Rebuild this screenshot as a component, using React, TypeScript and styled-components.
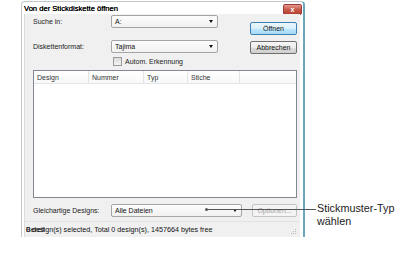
import React from 'react';
import styled, { createGlobalStyle } from 'styled-components';

const Global = createGlobalStyle`
  html, body { margin: 0; padding: 0; background: #fff; }
  body { font-family: "Liberation Sans", Arial, sans-serif; }
`;

const Page = styled.div`
  position: relative;
  width: 403px;
  height: 255px;
  padding: 1px 0 0 21px;
  box-sizing: border-box;
  overflow: hidden;
`;

const Window = styled.div`
  width: 284px;
  height: 236px;
  box-sizing: border-box;
  border: 1px solid #c3c7cc;
  border-right: 2px solid #6aa6bd;
  border-bottom: none;
  border-radius: 4px 4px 0 0;
  background: #fff;
  display: flex;
  flex-direction: column;
`;

const TitleBar = styled.div`
  height: 12px;
  display: flex;
  align-items: center;
  justify-content: space-between;
  padding: 0 1px 0 2px;
`;

const Title = styled.span`
  font-size: 7.6px;
  font-weight: 400;
  color: #000;
  text-shadow: 0 0 0.3px #000;
`;

const CloseBtn = styled.div`
  width: 17px;
  height: 9px;
  margin-top: 2px;
  border-radius: 2px;
  border: 1px solid #9e3a3a;
  background: linear-gradient(#e49a8e, #c85a4a 50%, #b7402f);
  display: flex;
  align-items: center;
  justify-content: center;
  color: #fff;
  font-size: 7px;
  font-weight: 700;
  line-height: 1;
`;

const Client = styled.div`
  flex: 1;
  margin: 0 3px 0 2px;
  background: #f0f0f0;
  border-left: 1px solid #dcdcdc;
  display: flex;
  flex-direction: column;
`;

const Content = styled.div`
  padding: 1px 3px 0 8px;
  display: flex;
  flex-direction: column;
`;

const TopArea = styled.div`
  display: flex;
  align-items: flex-start;
`;

const Form = styled.div`
  display: grid;
  grid-template-columns: 78px 107px;
  row-gap: 12px;
  align-items: center;
`;

const Label = styled.span`
  font-size: 7px;
  color: #222;
  white-space: nowrap;
`;

const Combo = styled.div<{ $w?: number }>`
  height: 13px;
  box-sizing: border-box;
  ${(p) => (p.$w ? `width: ${p.$w}px;` : '')}
  border: 1px solid #a5a5a5;
  border-radius: 2px;
  background: linear-gradient(#fdfdfd, #f1f1f1);
  display: flex;
  align-items: center;
  justify-content: space-between;
  padding: 0 4px 0 3px;
  font-size: 7px;
  color: #111;
`;

const Arrow = styled.span`
  width: 0;
  height: 0;
  border-left: 2.5px solid transparent;
  border-right: 2.5px solid transparent;
  border-top: 3px solid #111;
`;

const CheckRow = styled.div`
  grid-column: 2;
  margin-top: -8px;
  display: flex;
  align-items: center;
  gap: 3px;
  padding-left: 2px;
  height: 9px;
`;

const Check = styled.span`
  width: 9px;
  height: 9px;
  box-sizing: border-box;
  border: 1px solid #9a9a9a;
  background: linear-gradient(#dcdcdc, #f4f4f4);
`;

const ButtonCol = styled.div`
  margin-left: auto;
  margin-top: 7px;
  width: 47px;
  display: flex;
  flex-direction: column;
  gap: 6px;
`;

const Button = styled.div<{ $default?: boolean; $disabled?: boolean; $w?: number }>`
  height: 13px;
  box-sizing: border-box;
  ${(p) => (p.$w ? `width: ${p.$w}px;` : '')}
  border: 1px solid ${(p) => (p.$default ? '#3c7fb1' : p.$disabled ? '#c4c4c4' : '#707070')};
  border-radius: 2px;
  background: ${(p) =>
    p.$default
      ? 'linear-gradient(#eaf6fd, #d9f0fc 50%, #bee6fd 51%, #a7d9f5)'
      : p.$disabled
      ? '#f4f4f4'
      : 'linear-gradient(#f6f6f6, #ebebeb 50%, #dddddd 51%, #cfcfcf)'};
  display: flex;
  align-items: center;
  justify-content: center;
  font-size: 7px;
  color: ${(p) => (p.$disabled ? '#a3a3a3' : '#111')};
`;

const List = styled.div`
  margin-top: 4px;
  height: 128px;
  box-sizing: border-box;
  border: 1px solid #828790;
  background: #fff;
`;

const Header = styled.div`
  display: grid;
  grid-template-columns: 55px 55px 44px 52px 1fr;
  height: 12px;
  border-bottom: 1px solid #e5e5e5;
  background: linear-gradient(#ffffff, #f7f8fa);
`;

const HeaderCell = styled.div`
  border-right: 1px solid #e3e4e6;
  padding-left: 3px;
  display: flex;
  align-items: center;
  font-size: 7px;
  color: #333;
  &:last-child { border-right: none; }
`;

const BottomRow = styled.div`
  margin-top: 6px;
  display: flex;
  align-items: center;
  height: 13px;
`;

const BottomLabel = styled(Label)`
  width: 78px;
`;

const StatusBar = styled.div`
  margin-top: auto;
  height: 15px;
  border-top: 1px solid #e2e2e2;
  display: flex;
  align-items: center;
  justify-content: space-between;
  padding: 0 3px 0 1px;
`;

const StatusText = styled.span`
  position: relative;
  font-size: 7.2px;
  color: #111;
  white-space: nowrap;
`;

const Overprint = styled.span`
  position: absolute;
  left: 0;
  top: 0;
`;

const Grip = styled.svg`
  align-self: flex-end;
  margin-bottom: 2px;
`;

const CalloutLine = styled.div`
  position: absolute;
  left: 206px;
  top: 209px;
  width: 110px;
  height: 1px;
  background: #555;
`;

const CalloutDot = styled.div`
  position: absolute;
  left: 205px;
  top: 208px;
  width: 3px;
  height: 3px;
  border-radius: 50%;
  background: #555;
`;

const CalloutText = styled.div`
  position: absolute;
  left: 317px;
  top: 202px;
  font-size: 10.8px;
  line-height: 13px;
  color: #222;
`;

export default function App() {
  return (
    <>
      <Global />
      <Page>
        <Window>
          <TitleBar>
            <Title>Von der Stickdiskette öffnen</Title>
            <CloseBtn>x</CloseBtn>
          </TitleBar>
          <Client>
            <Content>
              <TopArea>
                <Form>
                  <Label>Suche in:</Label>
                  <Combo>
                    A:
                    <Arrow />
                  </Combo>
                  <Label>Diskettenformat:</Label>
                  <Combo>
                    Tajima
                    <Arrow />
                  </Combo>
                  <CheckRow>
                    <Check />
                    <Label>Autom. Erkennung</Label>
                  </CheckRow>
                </Form>
                <ButtonCol>
                  <Button $default>Öffnen</Button>
                  <Button>Abbrechen</Button>
                </ButtonCol>
              </TopArea>
              <List>
                <Header>
                  <HeaderCell>Design</HeaderCell>
                  <HeaderCell>Nummer</HeaderCell>
                  <HeaderCell>Typ</HeaderCell>
                  <HeaderCell>Stiche</HeaderCell>
                  <HeaderCell />
                </Header>
              </List>
              <BottomRow>
                <BottomLabel>Gleichartige Designs:</BottomLabel>
                <Combo $w={131}>
                  Alle Dateien
                  <Arrow />
                </Combo>
                <Button $disabled $w={45} style={{ marginLeft: 'auto' }}>
                  Optionen...
                </Button>
              </BottomRow>
            </Content>
            <StatusBar>
              <StatusText>
                0 design(s) selected, Total 0 design(s), 1457664 bytes free
                <Overprint>Bereit</Overprint>
              </StatusText>
              <Grip width="7" height="7" viewBox="0 0 7 7">
                <rect x="5" y="1" width="1" height="1" fill="#bbb" />
                <rect x="3" y="3" width="1" height="1" fill="#bbb" />
                <rect x="5" y="3" width="1" height="1" fill="#bbb" />
                <rect x="1" y="5" width="1" height="1" fill="#bbb" />
                <rect x="3" y="5" width="1" height="1" fill="#bbb" />
                <rect x="5" y="5" width="1" height="1" fill="#bbb" />
              </Grip>
            </StatusBar>
          </Client>
        </Window>
        <CalloutDot />
        <CalloutLine />
        <CalloutText>
          Stickmuster-Typ
          <br />
          wählen
        </CalloutText>
      </Page>
    </>
  );
}
